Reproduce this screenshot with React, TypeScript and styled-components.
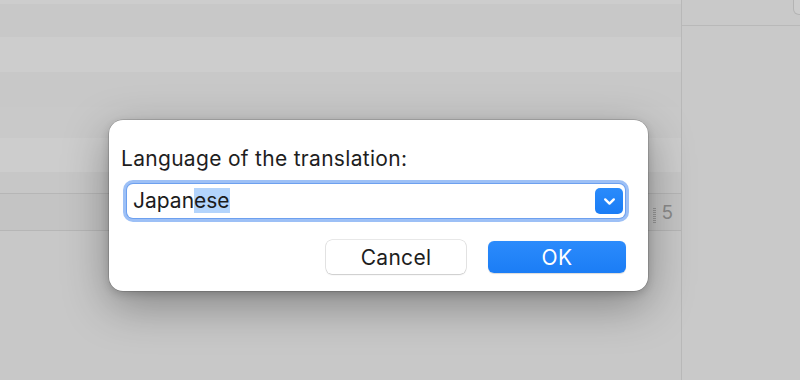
import React from "react";
import styled, { createGlobalStyle } from "styled-components";

const GlobalStyle = createGlobalStyle`
	html, body {
		margin: 0;
		padding: 0;
		background: #c8c8c8;
	}
	* {
		box-sizing: border-box;
	}
`;

const stripes = [
	{ h: 4, tone: "#cdcdcd" },
	{ h: 33, tone: "#c8c8c8" },
	{ h: 35, tone: "#cdcdcd" },
	{ h: 35, tone: "#c8c8c8" },
	{ h: 31, tone: "#c9c9c9" },
	{ h: 34, tone: "#cdcdcd" },
	{ h: 21, tone: "#c7c7c7" }
];

export default function App() {
	return (
		<>
			<GlobalStyle />
			<Page>
				<Main>
					{stripes.map((s, i) => (
						<Stripe key={i} $h={s.h} $tone={s.tone} />
					))}
					<Bar>
						<Grip />
						<PageNum>5</PageNum>
					</Bar>
					<Filler />
				</Main>
				<Side>
					<SideHeader>
						<CornerTab />
					</SideHeader>
				</Side>

				<Dialog>
					<Label>Language of the translation:</Label>
					<Select>
						<Value>
							Japan<Selected>ese</Selected>
						</Value>
						<Chevron>
							<svg width="13" height="9" viewBox="0 0 13 9">
								<path
									d="M2.2 2.4 L6.5 6.6 L10.8 2.4"
									fill="none"
									stroke="#ffffff"
									strokeWidth="2.4"
									strokeLinecap="round"
									strokeLinejoin="round"
								/>
							</svg>
						</Chevron>
					</Select>
					<Actions>
						<Button>Cancel</Button>
						<Button $primary>OK</Button>
					</Actions>
				</Dialog>
			</Page>
		</>
	);
}

const Page = styled.div`
	position: relative;
	width: 800px;
	height: 380px;
	display: flex;
	flex-direction: row;
	overflow: hidden;
	background: #c8c8c8;
	font-family: Inter, "Liberation Sans", sans-serif;
`;

const Main = styled.div`
	flex: 1;
	display: flex;
	flex-direction: column;
`;

const Stripe = styled.div<{ $h: number; $tone: string }>`
	height: ${(p) => p.$h}px;
	background: ${(p) => p.$tone};
`;

const Bar = styled.div`
	height: 38px;
	display: flex;
	flex-direction: row;
	align-items: center;
	justify-content: flex-end;
	gap: 5px;
	padding-right: 8px;
	background: #c4c4c4;
	border-top: 1px solid #b6b6b6;
	border-bottom: 1px solid #b6b6b6;
`;

const Grip = styled.div`
	width: 3px;
	height: 15px;
	margin-top: 6px;
	background: repeating-linear-gradient(
		to bottom,
		#9a9a9a 0px,
		#9a9a9a 1px,
		transparent 1px,
		transparent 2px
	);
`;

const PageNum = styled.span`
	font-size: 19px;
	color: #8b8b8b;
`;

const Filler = styled.div`
	flex: 1;
	background: #c8c8c8;
`;

const Side = styled.div`
	width: 119px;
	display: flex;
	flex-direction: column;
	background: #c9c9c9;
	border-left: 1px solid #b8b8b8;
`;

const SideHeader = styled.div`
	height: 26px;
	display: flex;
	justify-content: flex-end;
	border-bottom: 1px solid #b9b9b9;
`;

const CornerTab = styled.div`
	width: 8px;
	height: 15px;
	margin-right: -1px;
	background: #cdcdcd;
	border: 1px solid #b4b4b4;
	border-top: none;
	border-radius: 0 0 0 6px;
`;

const Dialog = styled.div`
	position: absolute;
	left: 109px;
	top: 120px;
	width: 539px;
	height: 171px;
	display: flex;
	flex-direction: column;
	padding: 27px 19px 0 14px;
	background: #ffffff;
	border-radius: 14px;
	box-shadow: 0 0 0 0.5px rgba(0, 0, 0, 0.25), 0 14px 45px rgba(0, 0, 0, 0.34),
		0 3px 8px rgba(0, 0, 0, 0.16);
`;

const Label = styled.div`
	margin-left: -2px;
	font-size: 21px;
	line-height: 24px;
	color: #1e1e1e;
	letter-spacing: 0.3px;
`;

const Select = styled.div`
	margin-top: 13px;
	height: 34px;
	display: flex;
	flex-direction: row;
	align-items: center;
	justify-content: space-between;
	padding: 0 2px 0 6px;
	margin-left: 4px;
	margin-right: 4px;
	background: #ffffff;
	border-radius: 6px;
	box-shadow: 0 0 0 1px #6da0ef, 0 0 0 4px #9dc0f6;
`;

const Value = styled.span`
	font-size: 21px;
	line-height: 26px;
	color: #1c1c1c;
`;

const Selected = styled.span`
	background: #b3d4fc;
`;

const Chevron = styled.div`
	width: 28px;
	height: 26px;
	display: flex;
	align-items: center;
	justify-content: center;
	border-radius: 5px;
	background: linear-gradient(to bottom, #2a8bfb, #1a7cf5);
`;

const Actions = styled.div`
	margin-top: 22px;
	display: flex;
	flex-direction: row;
	justify-content: flex-end;
	align-items: center;
	gap: 22px;
	padding-right: 3px;
`;

const Button = styled.div<{ $primary?: boolean }>`
	width: ${(p) => (p.$primary ? 138 : 140)}px;
	height: ${(p) => (p.$primary ? 32 : 34)}px;
	display: flex;
	align-items: center;
	justify-content: center;
	font-size: 21px;
	letter-spacing: 0.3px;
	border-radius: 6px;
	color: ${(p) => (p.$primary ? "#ffffff" : "#1e1e1e")};
	background: ${(p) =>
		p.$primary ? "linear-gradient(to bottom, #2b8bfc, #1b7df5)" : "#ffffff"};
	box-shadow: ${(p) =>
		p.$primary
			? "0 0.5px 1px rgba(0, 0, 0, 0.15)"
			: "0 0 0 0.5px rgba(0, 0, 0, 0.18), 0 1px 1.5px rgba(0, 0, 0, 0.12)"};
`;
